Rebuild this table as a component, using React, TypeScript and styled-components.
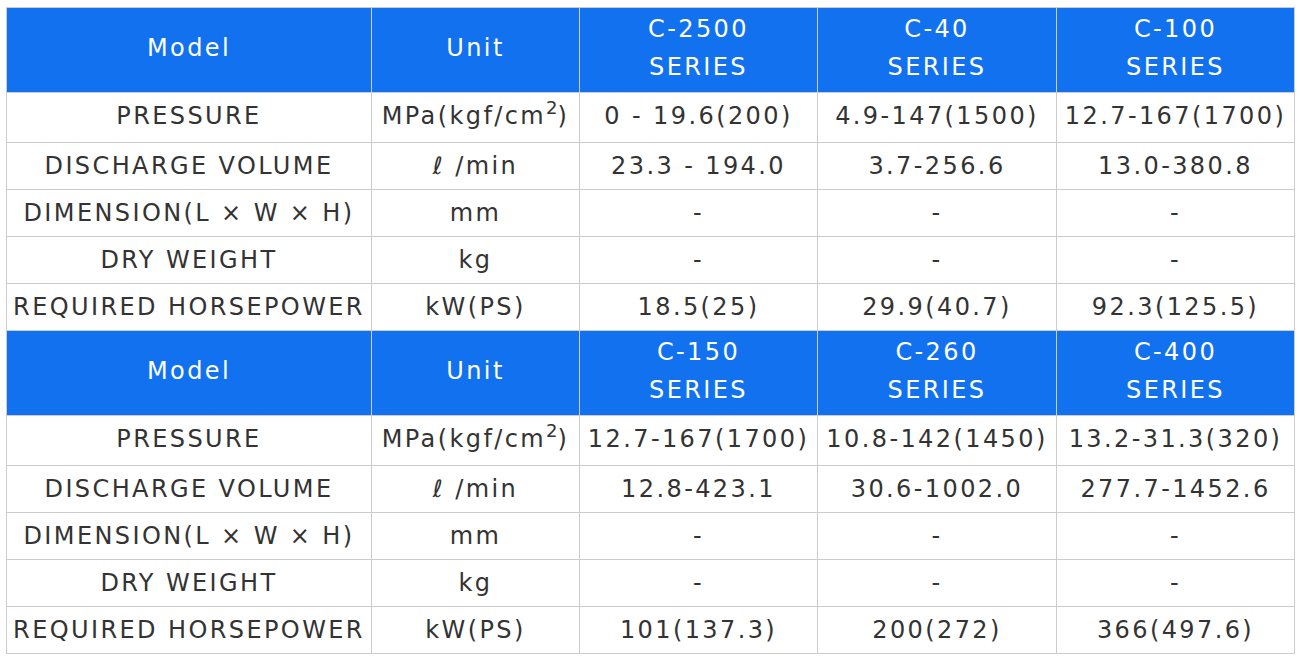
import React from 'react';
import styled, { createGlobalStyle } from 'styled-components';

//styles
const GlobalStyle = createGlobalStyle`
  html, body {
    margin: 0;
    padding: 0;
    background: #ffffff;
  }
`;

const Page = styled.div`
  padding: 7px 6px;
`;

const SpecTable = styled.table`
  width: 1289px;
  border-collapse: collapse;
  table-layout: fixed;
  font-family: 'DejaVu Sans', Verdana, sans-serif;
  font-size: 24px;
  letter-spacing: 0.1em;
  line-height: 38px;
  color: #333333;
  text-align: center;
`;

const Col = styled.col<{ $w: number }>`
  width: ${(p) => p.$w}px;
`;

const Cell = styled.td<{ $tall?: boolean }>`
  border: 1px solid #cccccc;
  padding: ${(p) => (p.$tall ? '4px 0 7px' : '4px 0')};
  white-space: nowrap;
  vertical-align: middle;
`;

const HeadCell = styled.th`
  border: 1px solid #cccccc;
  padding: 2px 0 6px;
  font-weight: normal;
  white-space: nowrap;
  background: #1271ef;
  color: #ffffff;
`;

const Sup = styled.sup`
  font-size: 0.75em;
  line-height: 1;
  vertical-align: 0.55em;
  letter-spacing: 0;
`;

//data
type Block = {
  models: string[];
  pressure: string[];
  discharge: string[];
  horsepower: string[];
};

const widths = [365, 208, 238, 239, 238];

const blocks: Block[] = [
  {
    models: ['C-2500', 'C-40', 'C-100'],
    pressure: ['0 - 19.6(200)', '4.9-147(1500)', '12.7-167(1700)'],
    discharge: ['23.3 - 194.0', '3.7-256.6', '13.0-380.8'],
    horsepower: ['18.5(25)', '29.9(40.7)', '92.3(125.5)'],
  },
  {
    models: ['C-150', 'C-260', 'C-400'],
    pressure: ['12.7-167(1700)', '10.8-142(1450)', '13.2-31.3(320)'],
    discharge: ['12.8-423.1', '30.6-1002.0', '277.7-1452.6'],
    horsepower: ['101(137.3)', '200(272)', '366(497.6)'],
  },
];

const SpecRow: React.FC<{
  label: string;
  unit: React.ReactNode;
  values: string[];
  tall?: boolean;
}> = ({ label, unit, values, tall }) => (
  <tr>
    <Cell $tall={tall}>{label}</Cell>
    <Cell $tall={tall}>{unit}</Cell>
    {values.map((v, i) => (
      <Cell key={i} $tall={tall}>
        {v}
      </Cell>
    ))}
  </tr>
);

//component definition
const App: React.FC = () => {
  return (
    <Page>
      <GlobalStyle />
      <SpecTable>
        <colgroup>
          {widths.map((w, i) => (
            <Col key={i} $w={w} />
          ))}
        </colgroup>
        <tbody>
          {blocks.map((b, bi) => (
            <React.Fragment key={bi}>
              <tr>
                <HeadCell>Model</HeadCell>
                <HeadCell>Unit</HeadCell>
                {b.models.map((m) => (
                  <HeadCell key={m}>
                    {m}
                    <br />
                    SERIES
                  </HeadCell>
                ))}
              </tr>
              <SpecRow
                tall
                label="PRESSURE"
                unit={
                  <>
                    MPa(kgf/cm<Sup>2</Sup>)
                  </>
                }
                values={b.pressure}
              />
              <SpecRow label="DISCHARGE VOLUME" unit="ℓ /min" values={b.discharge} />
              <SpecRow label="DIMENSION(L × W × H)" unit="mm" values={['-', '-', '-']} />
              <SpecRow label="DRY WEIGHT" unit="kg" values={['-', '-', '-']} />
              <SpecRow label="REQUIRED HORSEPOWER" unit="kW(PS)" values={b.horsepower} />
            </React.Fragment>
          ))}
        </tbody>
      </SpecTable>
    </Page>
  );
};

export default App;
